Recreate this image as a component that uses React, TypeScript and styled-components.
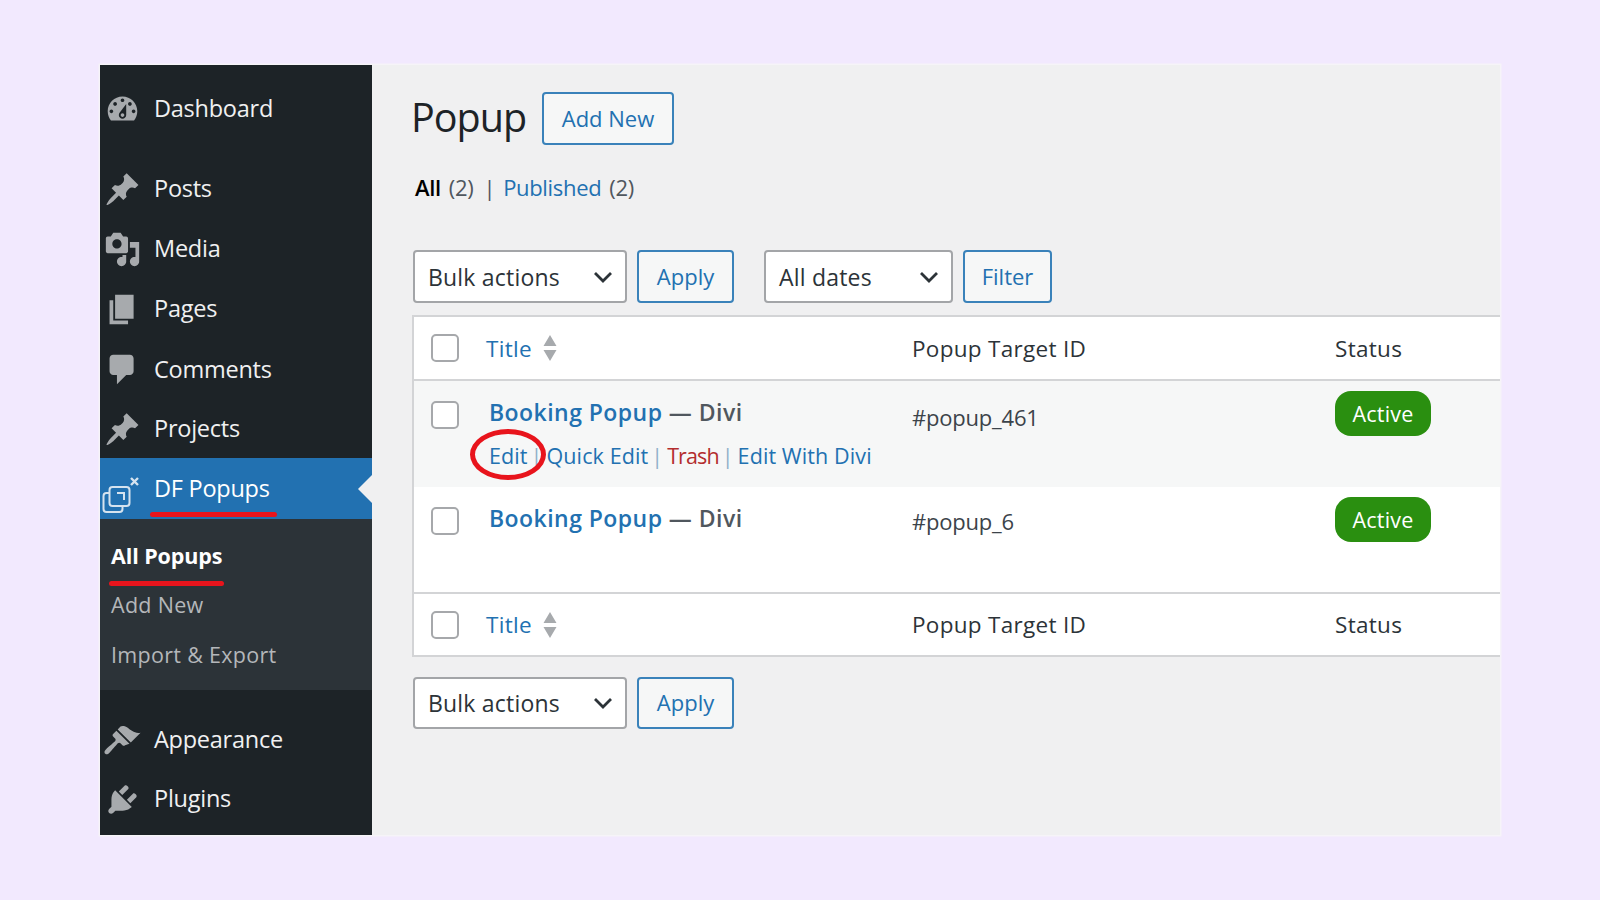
import React from "react";
import styled, { createGlobalStyle } from "styled-components";

const Global = createGlobalStyle`
  html, body { margin: 0; padding: 0; background: #f2e9fe; }
  body { font-family: "Open Sans", "Noto Sans", sans-serif; width: 1600px; height: 900px; overflow: hidden; }
  * { box-sizing: border-box; }
`;

const Page = styled.div`
  width: 1600px;
  height: 900px;
  padding: 65px 100px 65px 100px;
`;
const Frame = styled.div`
  display: flex;
  height: 770px;
  background: #f0f0f1;
  box-shadow: 0 0 0 1.5px #f6f4f8;
`;
const Sidebar = styled.nav`
  width: 272px;
  flex: none;
  background: #1d2327;
  display: flex;
  flex-direction: column;
  padding-top: 14px;
`;
const Item = styled.div<{ $h: number; $after?: number; $active?: boolean }>`
  position: relative;
  height: ${(p) => p.$h}px;
  margin-bottom: ${(p) => p.$after ?? 0}px;
  display: flex;
  align-items: center;
  padding-left: 5px;
  gap: 15px;
  flex: none;
  color: ${(p) => (p.$active ? "#ffffff" : "#f0f0f1")};
  background: ${(p) => (p.$active ? "#2271b1" : "transparent")};
  font-size: 23.5px;
  letter-spacing: -0.25px;
`;
const Label = styled.span`
  position: relative;
  top: -1px;
`;
const Notch = styled.span`
  position: absolute;
  right: 0;
  top: 17px;
  border-style: solid;
  border-width: 14px 14px 14px 0;
  border-color: transparent #f0f0f1 transparent transparent;
`;
const RedLine = styled.span<{ $left: number; $top: number; $w: number }>`
  position: absolute;
  left: ${(p) => p.$left}px;
  top: ${(p) => p.$top}px;
  width: ${(p) => p.$w}px;
  height: 5px;
  border-radius: 3px;
  background: #e8141c;
`;
const Sub = styled.div`
  height: 171px;
  flex: none;
  background: #2c3338;
  padding-top: 12px;
  display: flex;
  flex-direction: column;
  margin-bottom: 20px;
`;
const SubItem = styled.div<{ $current?: boolean; $h?: number }>`
  position: relative;
  height: ${(p) => p.$h ?? 49}px;
  flex: none;
  display: flex;
  align-items: center;
  padding-left: 11px;
  font-size: 21.5px;
  letter-spacing: ${(p) => (p.$current ? "-0.1px" : "0.3px")};
  font-weight: ${(p) => (p.$current ? 700 : 400)};
  color: ${(p) => (p.$current ? "#ffffff" : "#b4b7ba")};
`;
const Icon = styled.svg`
  width: 37px;
  height: 37px;
  margin: 0 -1.5px;
  flex: none;
  fill: #a7aaad;
`;
const PopIcon = styled.svg`
  width: 40px;
  height: 40px;
  flex: none;
  margin: 13px -3px 0 -3px;
  fill: none;
  stroke: #d5e3ef;
  stroke-width: 2;
`;

const Main = styled.main`
  flex: 1;
  display: flex;
  flex-direction: column;
  padding: 27px 0 0 40px;
  min-width: 0;
`;
const Heading = styled.div`
  display: flex;
  align-items: center;
  height: 53px;
`;
const Title = styled.h1`
  margin: -4px 16px 0 -1px;
  width: 115px;
  font-size: 39.5px;
  font-weight: 400;
  letter-spacing: -1px;
  white-space: nowrap;
  color: #1d2327;
`;
const Button = styled.button<{ $w: number }>`
  width: ${(p) => p.$w}px;
  height: 100%;
  padding: 0 0 2px;
  border: 2px solid #3a82ba;
  border-radius: 4px;
  background: #f6f7f7;
  color: #2271b1;
  font: inherit;
  font-size: 22px;
  letter-spacing: 0;
`;
const Views = styled.div`
  display: flex;
  align-items: center;
  height: 30px;
  margin: 27px 0 0 3px;
  font-size: 22px;
  letter-spacing: -0.33px;
  color: #50575e;
`;
const Strong = styled.b`
  color: #000;
  font-weight: 600;
  margin-right: 8px;
`;
const Link = styled.span<{ $danger?: boolean }>`
  color: ${(p) => (p.$danger ? "#b32d2e" : "#2271b1")};
  letter-spacing: ${(p) => (p.$danger ? "-0.9px" : "inherit")};
`;
const Sep = styled.span`
  margin: 0 8px 0 10px;
  color: #50575e;
`;
const Count = styled.span`
  margin-left: 8px;
`;
const Toolbar = styled.div<{ $top: number; $h: number }>`
  display: flex;
  align-items: center;
  height: ${(p) => p.$h}px;
  margin-top: ${(p) => p.$top}px;
`;
const Select = styled.div<{ $w: number }>`
  width: ${(p) => p.$w}px;
  height: 100%;
  display: flex;
  align-items: center;
  justify-content: space-between;
  padding: 0 12px 0 13px;
  margin-left: 1px;
  margin-right: 10px;
  background: #fff;
  border: 2px solid #a3a5a8;
  border-radius: 4px;
  color: #2c3338;
  font-size: 23px;
  letter-spacing: 0.2px;
`;
const Chevron = styled.svg`
  width: 20px;
  height: 12px;
  fill: none;
  stroke: #2c3338;
  stroke-width: 2.8;
`;
const Gap = styled.div`
  width: 29px;
`;
const Table = styled.div`
  margin-top: 12px;
  background: #fff;
  border: 2px solid #d3d4d6;
  border-width: 2px 0 0 2px;
`;
const Row = styled.div<{ $h: number; $bg?: string; $line?: boolean }>`
  position: relative;
  height: ${(p) => p.$h}px;
  background: ${(p) => p.$bg ?? "#fff"};
  border-bottom: ${(p) => (p.$line ? "2px solid #d3d4d6" : "0")};
  display: grid;
  grid-template-columns: 72px 426px 423px 1fr;
  align-items: ${(p) => (p.$line ? "center" : "start")};
  color: #2c3338;
  font-size: 22.5px;
  letter-spacing: 0.3px;
`;
const CheckCell = styled.div<{ $top?: number }>`
  padding: ${(p) => p.$top ?? 0}px 0 0 17px;
  display: flex;
`;
const Check = styled.span`
  width: 28px;
  height: 28px;
  background: #fff;
  border: 2px solid #a6a8ab;
  border-radius: 5px;
`;
const SortCell = styled.div`
  display: flex;
  align-items: center;
  gap: 11px;
`;
const Sort = styled.svg`
  width: 14px;
  height: 28px;
  fill: #a7aaad;
`;
const TitleCell = styled.div`
  padding: 15px 0 0 3px;
`;
const RowTitle = styled.div`
  font-weight: 600;
  font-size: 23px;
  letter-spacing: 0.45px;
  color: #50575e;
  line-height: 32px;
`;
const Actions = styled.div`
  margin-top: 13px;
  font-size: 21.5px;
  letter-spacing: 0.1px;
  display: flex;
  white-space: nowrap;
  position: relative;
  line-height: 30px;
`;
const Bar = styled.span`
  margin: 0 4px 0 3px;
  color: #8fb0c9;
`;
const Ring = styled.span`
  position: absolute;
  left: -19px;
  top: -12px;
  width: 76px;
  height: 51px;
  border: 5.5px solid #e8141c;
  border-radius: 50%;
`;
const Target = styled.div<{ $top: number }>`
  padding-top: ${(p) => p.$top}px;
  font-size: 22px;
  letter-spacing: -0.2px;
  color: #3c434a;
`;
const StatusCell = styled.div<{ $top: number }>`
  padding-top: ${(p) => p.$top}px;
`;
const Badge = styled.span`
  display: flex;
  align-items: center;
  justify-content: center;
  width: 96px;
  height: 45px;
  border-radius: 16px;
  background: #2a8f10;
  color: #fff;
  font-size: 21.5px;
  letter-spacing: 0.2px;
`;
const Divider = styled.div`
  height: 2px;
  background: #d3d4d6;
`;

const P = {
  dash: "M3.76 16h12.48c1.1-1.37 1.76-3.11 1.76-5 0-4.42-3.58-8-8-8s-8 3.58-8 8c0 1.89.66 3.63 1.76 5zM10 4c.55 0 1 .45 1 1s-.45 1-1 1-1-.45-1-1 .45-1 1-1zM6 6c.55 0 1 .45 1 1s-.45 1-1 1-1-.45-1-1 .45-1 1-1zm8 0c.55 0 1 .45 1 1s-.45 1-1 1-1-.45-1-1 .45-1 1-1zm-5.37 5.55L12 7v6c0 1.1-.9 2-2 2s-2-.9-2-2c0-.57.24-1.08.63-1.45zM4 10c.55 0 1 .45 1 1s-.45 1-1 1-1-.45-1-1 .45-1 1-1zm12 0c.55 0 1 .45 1 1s-.45 1-1 1-1-.45-1-1 .45-1 1-1zm-5 3c0-.55-.45-1-1-1s-1 .45-1 1 .45 1 1 1 1-.45 1-1z",
  pin: "M10.44 3.02l1.82-1.82 6.36 6.35-1.83 1.82c-1.05-.68-2.48-.57-3.41.36l-.75.75c-.92.93-1.04 2.35-.35 3.41l-1.83 1.82-2.41-2.41-2.8 2.79c-.42.42-3.38 2.71-3.8 2.29s1.86-3.39 2.28-3.81l2.79-2.79L4.1 9.36l1.83-1.82c1.05.69 2.48.57 3.4-.36l.75-.75c.93-.92 1.05-2.35.36-3.41z",
  media: "M13 11V4c0-.55-.45-1-1-1h-1.67L9 1H5L3.67 3H2c-.55 0-1 .45-1 1v7c0 .55.45 1 1 1h10c.55 0 1-.45 1-1zM7 4.5c1.38 0 2.5 1.12 2.5 2.5S8.38 9.5 7 9.5 4.5 8.38 4.5 7 5.62 4.5 7 4.5zM14 6h5v10.5c0 1.38-1.12 2.5-2.5 2.5S14 17.88 14 16.5s1.12-2.5 2.5-2.5c.17 0 .34.02.5.05V9h-3V6zm-4 8.05V13h2v3.5c0 1.38-1.12 2.5-2.5 2.5S7 17.88 7 16.5 8.12 14 9.5 14c.17 0 .34.02.5.05z",
  page: "M6 15V2h10v13H6zm-1 1h8v2H3V5h2v11z",
  comment: "M5 2h9c1.1 0 2 .9 2 2v7c0 1.1-.9 2-2 2h-2l-5 5v-5H5c-1.1 0-2-.9-2-2V4c0-1.1.9-2 2-2z",
  brush: "M14.48 11.06L7.41 3.99l1.5-1.5c.5-.56 2.3-.47 3.51.32 1.21.8 1.43 1.28 2.91 2.1 1.18.64 2.45 1.26 4.45.85zm-.71.71L6.7 4.7 4.93 6.47c-.39.39-.39 1.02 0 1.41l1.06 1.06c.39.39.39 1.03 0 1.42-.6.6-3.5 3-4.5 4-.9.9-1.4 1.6-1.2 2.3.2.6.8.9 1.4.8.7-.2 1.3-.9 2.1-1.8 1-1.1 3.1-3.6 3.7-4.2.39-.39 1.03-.39 1.42 0l1.06 1.06c.39.39 1.02.39 1.41 0z",
  plug: "M13.11 4.36L9.87 7.6 8 5.73l3.24-3.24c.35-.34 1.05-.2 1.56.32.52.51.66 1.21.31 1.55zm-8 1.77l.91-1.12 9.01 9.01-1.19.84c-.71.71-2.63 1.16-3.82 1.16H6.14L4.9 17.26c-.59.59-1.54.59-2.12 0-.59-.58-.59-1.53 0-2.12l1.24-1.24v-3.88c0-1.13.4-3.19 1.09-3.89zm7.26 3.97l3.24-3.24c.34-.35 1.04-.21 1.55.31.52.51.66 1.21.31 1.55l-3.24 3.25z",
};

const MenuIcon = ({ d }: { d: string }) => (
  <Icon viewBox="0 0 20 20"><path d={d} /></Icon>
);
const SortIcon = () => (
  <Sort viewBox="0 0 14 28"><path d="M7 1l6.5 11H.5zM.5 16h13L7 27z" /></Sort>
);
const Arrow = () => (
  <Chevron viewBox="0 0 20 12"><path d="M2 2l8 8 8-8" /></Chevron>
);

const HeaderRow = ({ h }: { h: number }) => (
  <Row $h={h} $line>
    <CheckCell><Check /></CheckCell>
    <SortCell><Link>Title</Link><SortIcon /></SortCell>
    <div>Popup Target ID</div>
    <div>Status</div>
  </Row>
);

export default function App() {
  return (
    <Page>
      <Global />
      <Frame>
        <Sidebar>
          <Item $h={60} $after={20}><MenuIcon d={P.dash} /><Label>Dashboard</Label></Item>
          <Item $h={60}><MenuIcon d={P.pin} /><Label>Posts</Label></Item>
          <Item $h={60}><MenuIcon d={P.media} /><Label>Media</Label></Item>
          <Item $h={60}><MenuIcon d={P.page} /><Label>Pages</Label></Item>
          <Item $h={61}><MenuIcon d={P.comment} /><Label>Comments</Label></Item>
          <Item $h={58}><MenuIcon d={P.pin} /><Label>Projects</Label></Item>
          <Item $h={61} $active>
            <PopIcon viewBox="0 0 40 40">
              <rect x="1.5" y="18" width="19" height="19" rx="3" />
              <rect x="7.5" y="12" width="20" height="19" rx="3" fill="#2271b1" />
              <path d="M15 18h7v7" />
              <path d="M29 3l7 7M36 3l-7 7" strokeWidth="2.4" />
            </PopIcon>
            <Label>DF Popups</Label>
            <Notch />
            <RedLine $left={50} $top={54} $w={127} />
          </Item>
          <Sub>
            <SubItem $current>All Popups<RedLine $left={9} $top={50} $w={115} /></SubItem>
            <SubItem>Add New</SubItem>
            <SubItem $h={51}>Import &amp; Export</SubItem>
          </Sub>
          <Item $h={60}><MenuIcon d={P.brush} /><Label>Appearance</Label></Item>
          <Item $h={58}><MenuIcon d={P.plug} /><Label>Plugins</Label></Item>
        </Sidebar>
        <Main>
          <Heading>
            <Title>Popup</Title>
            <Button $w={132}>Add New</Button>
          </Heading>
          <Views>
            <Strong>All</Strong> (2)<Sep>|</Sep><Link>Published</Link><Count>(2)</Count>
          </Views>
          <Toolbar $top={48} $h={53}>
            <Select $w={214}>Bulk actions<Arrow /></Select>
            <Button $w={97}>Apply</Button>
            <Gap />
            <Select $w={189}>All dates<Arrow /></Select>
            <Button $w={89}>Filter</Button>
          </Toolbar>
          <Table>
            <HeaderRow h={64} />
            <Row $h={106} $bg="#f6f7f7">
              <CheckCell $top={20}><Check /></CheckCell>
              <TitleCell>
                <RowTitle><Link>Booking Popup</Link> — Divi</RowTitle>
                <Actions>
                  <Ring />
                  <Link>Edit</Link><Bar>|</Bar><Link>Quick Edit</Link><Bar>|</Bar>
                  <Link $danger>Trash</Link><Bar>|</Bar><Link>Edit With Divi</Link>
                </Actions>
              </TitleCell>
              <Target $top={21}>#popup_461</Target>
              <StatusCell $top={10}><Badge>Active</Badge></StatusCell>
            </Row>
            <Row $h={105}>
              <CheckCell $top={20}><Check /></CheckCell>
              <TitleCell><RowTitle><Link>Booking Popup</Link> — Divi</RowTitle></TitleCell>
              <Target $top={19}>#popup_6</Target>
              <StatusCell $top={10}><Badge>Active</Badge></StatusCell>
            </Row>
            <Divider />
            <HeaderRow h={63} />
          </Table>
          <Toolbar $top={20} $h={52}>
            <Select $w={214}>Bulk actions<Arrow /></Select>
            <Button $w={97}>Apply</Button>
          </Toolbar>
        </Main>
      </Frame>
    </Page>
  );
}
